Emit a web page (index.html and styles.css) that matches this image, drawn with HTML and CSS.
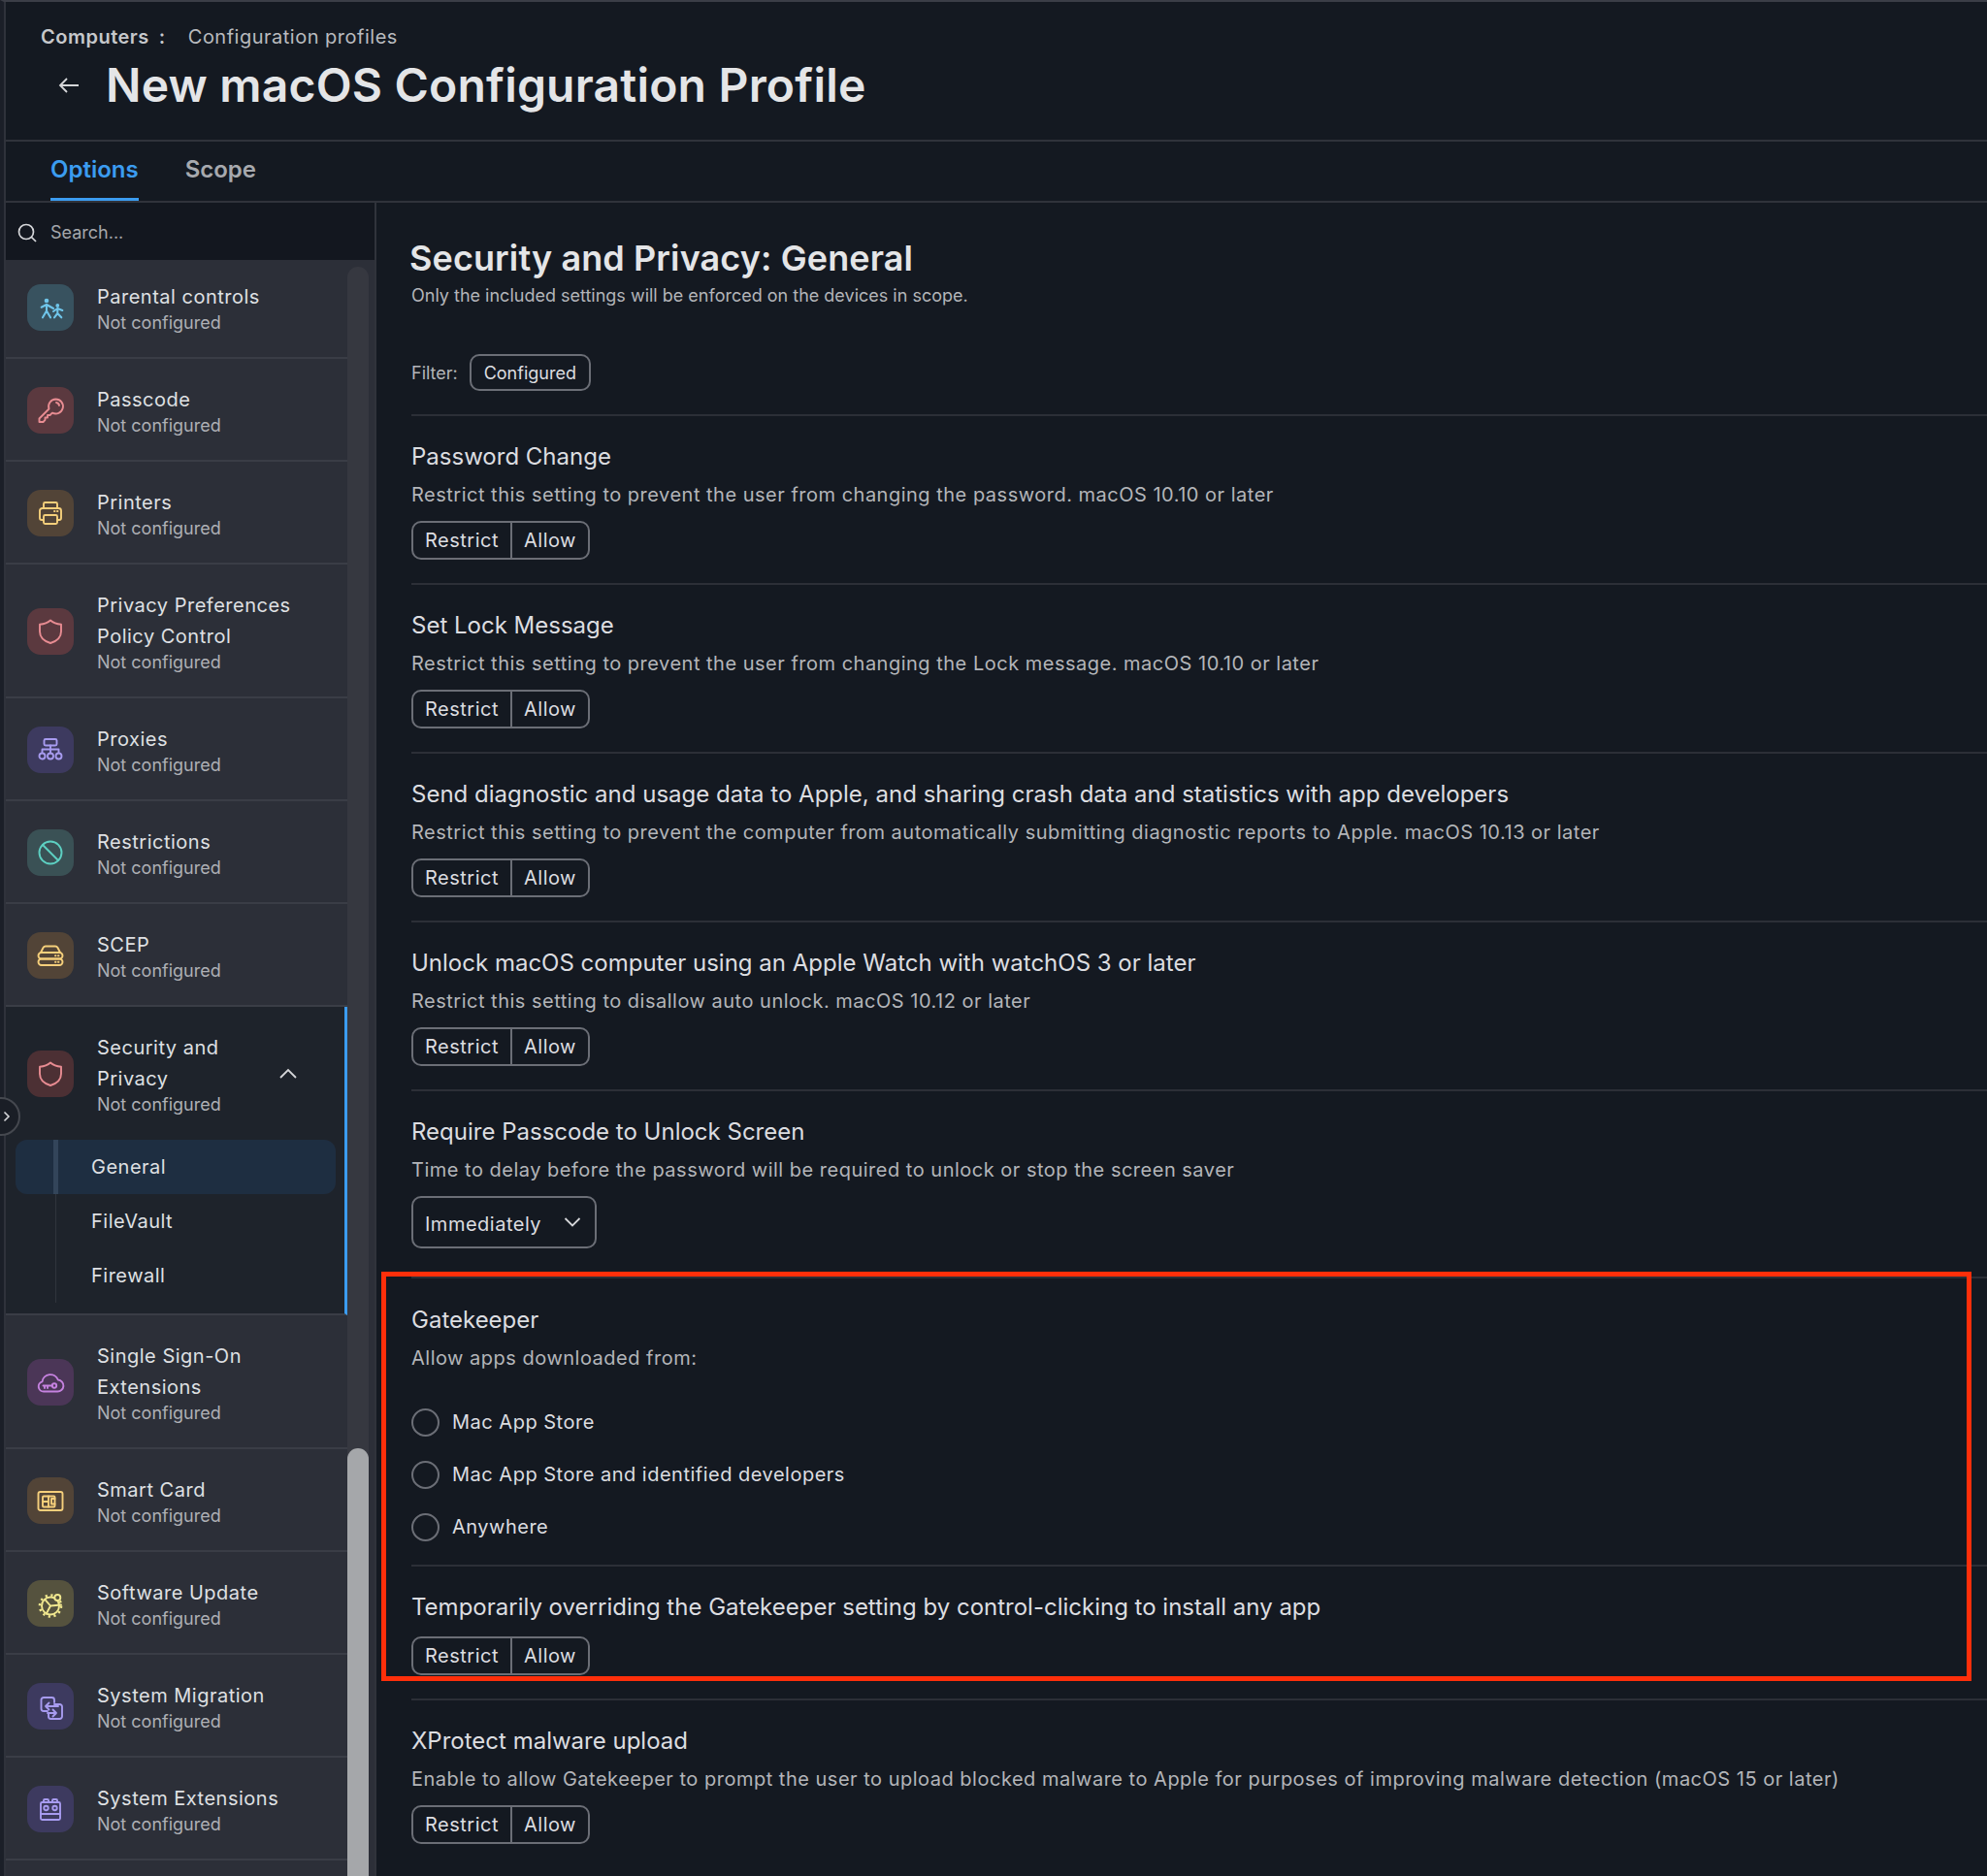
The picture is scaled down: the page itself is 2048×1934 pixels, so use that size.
FILE: index.html
```html
<!DOCTYPE html>
<html lang="en">
<head>
  <meta charset="UTF-8">
  <meta name="viewport" content="width=device-width, initial-scale=1.0">
  <title>New macOS Configuration Profile</title>
  <link rel="stylesheet" href="styles.css">
</head>
<body>
  <div class="app">
    <!-- Page header -->
    <header class="page-header">
      <div class="breadcrumb"><strong>Computers</strong><span class="colon">:</span><span>Configuration profiles</span></div>
      <div class="title-row">
        <svg class="back" viewBox="0 0 22 18"><path d="M21 9H2M9 2 2 9l7 7"/></svg>
        <h1>New macOS Configuration Profile</h1>
      </div>
    </header>

    <nav class="tabs">
      <a class="tab active">Options</a>
      <a class="tab">Scope</a>
    </nav>

    <div class="content">
      <!-- Payload list -->
      <aside class="sidebar">
        <div class="search">
          <svg viewBox="0 0 20 20"><circle cx="9" cy="9" r="7.5"/><path d="m14.5 14.5 4.5 4.5"/></svg>
          <span>Search...</span>
        </div>
        <div class="sidebar-body">
          <div class="list">
            <div class="item">
              <span class="tile blue"><svg viewBox="0 0 28 28"><circle class="dot" cx="10" cy="7" r="2.300"/><circle class="dot" cx="21.300" cy="12" r="1.900"/><path class="bold" d="M4.700 13.700 10 11l7 4M10 11v6.500l-4 6.800M10 17.500l4 6.800M17 18l4.300-3 5 2M21.300 15v5l-3.300 4.300M21.300 20l4 4.300"/></svg></span>
              <div class="item-text"><div class="item-title">Parental controls</div><div class="item-sub">Not configured</div></div>
            </div>
            <div class="item">
              <span class="tile red"><svg viewBox="0 0 28 28"><path d="M19.500 2.500a7.500 7.500 0 1 1-3.600 14.100l-2.400 2.400H11v2.500H8.500v2.300L6.500 26h-4v-3.500l10-10a7.500 7.500 0 0 1 7-10z"/><path d="M20 6a3.500 3.500 0 0 1 3 3"/></svg></span>
              <div class="item-text"><div class="item-title">Passcode</div><div class="item-sub">Not configured</div></div>
            </div>
            <div class="item">
              <span class="tile amber"><svg viewBox="0 0 28 28"><path d="M7 9V4.500A1.500 1.500 0 0 1 8.500 3h11A1.500 1.500 0 0 1 21 4.500V9"/><path d="M7 21H5a2 2 0 0 1-2-2v-7.500A2.500 2.500 0 0 1 5.500 9h17a2.500 2.500 0 0 1 2.500 2.500V19a2 2 0 0 1-2 2h-2"/><rect x="7" y="16" width="14" height="9" rx="1.500"/><path d="M18 12h.5M21 12h.5"/></svg></span>
              <div class="item-text"><div class="item-title">Printers</div><div class="item-sub">Not configured</div></div>
            </div>
            <div class="item">
              <span class="tile red"><svg viewBox="0 0 28 28"><path d="M14 2.500c-3 2.600-6.500 3.800-11 4.300V14c0 5.800 4.500 10 11 12 6.500-2 11-6.200 11-12V6.800c-4.500-.5-8-1.700-11-4.300z"/></svg></span>
              <div class="item-text"><div class="item-title">Privacy Preferences<br>Policy Control</div><div class="item-sub">Not configured</div></div>
            </div>
            <div class="item">
              <span class="tile violet"><svg viewBox="0 0 28 28"><rect x="7.500" y="3" width="13" height="6.500" rx="1.500"/><path d="M14 9.500v8M5.500 17v-3.500h17V17"/><circle cx="5.500" cy="20.500" r="3"/><circle cx="14" cy="20.500" r="3"/><circle cx="22.500" cy="20.500" r="3"/></svg></span>
              <div class="item-text"><div class="item-title">Proxies</div><div class="item-sub">Not configured</div></div>
            </div>
            <div class="item">
              <span class="tile teal"><svg viewBox="0 0 28 28"><circle cx="14" cy="14" r="11.500"/><path d="m6 6 16 16"/></svg></span>
              <div class="item-text"><div class="item-title">Restrictions</div><div class="item-sub">Not configured</div></div>
            </div>
            <div class="item">
              <span class="tile amber"><svg viewBox="0 0 28 28"><path d="M4 11l2.500-5a3 3 0 0 1 2.500-1.500h10A3 3 0 0 1 21.500 6l2.500 5"/><rect x="1.500" y="11" width="25" height="6.500" rx="3.200"/><rect x="1.500" y="17.500" width="25" height="6.500" rx="3.200"/><path d="M19 14.200h.5M22 14.200h.5M19 20.800h.5M22 20.800h.5"/></svg></span>
              <div class="item-text"><div class="item-title">SCEP</div><div class="item-sub">Not configured</div></div>
            </div>

            <div class="group">
              <div class="item open">
                <span class="tile red dim"><svg viewBox="0 0 28 28"><path d="M14 2.500c-3 2.600-6.500 3.800-11 4.300V14c0 5.800 4.500 10 11 12 6.500-2 11-6.200 11-12V6.800c-4.500-.5-8-1.700-11-4.300z"/></svg></span>
                <div class="item-text"><div class="item-title">Security and<br>Privacy</div><div class="item-sub">Not configured</div></div>
                <svg class="caret" viewBox="0 0 18 12"><path d="m1 10 8-8 8 8"/></svg>
              </div>
              <ul class="sub-list">
                <li class="selected">General</li>
                <li>FileVault</li>
                <li>Firewall</li>
              </ul>
            </div>

            <div class="item">
              <span class="tile purple"><svg viewBox="0 0 28 28"><path d="M7 23.500a5.200 5.200 0 0 1-1.500-10.200A8.500 8.500 0 0 1 21.800 11.500 6 6 0 0 1 21 23.500z"/><circle cx="18" cy="17.500" r="2.200"/><path d="M15.800 17.500H6.500M8 17.500V20M11 17.500V20"/></svg></span>
              <div class="item-text"><div class="item-title">Single Sign-On<br>Extensions</div><div class="item-sub">Not configured</div></div>
            </div>
            <div class="item">
              <span class="tile amber"><svg viewBox="0 0 28 28"><rect x="1.500" y="5" width="25" height="19" rx="2"/><rect x="6" y="9.500" width="12.500" height="11" rx="1"/><path d="M12 9.500V15H6M12 15v5.500M15 12h3.500M15 12v5.500h3.500"/></svg></span>
              <div class="item-text"><div class="item-title">Smart Card</div><div class="item-sub">Not configured</div></div>
            </div>
            <div class="item">
              <span class="tile olive"><svg viewBox="0 0 28 28"><circle cx="14" cy="16.500" r="9"/><circle class="teeth" cx="14" cy="16.500" r="11"/><path d="m14 16.500-5.300-6.200M14 16.500l11-1M14 16.500l-4.300 8.200"/><circle class="mask" cx="21.300" cy="8" r="3"/></svg></span>
              <div class="item-text"><div class="item-title">Software Update</div><div class="item-sub">Not configured</div></div>
            </div>
            <div class="item">
              <span class="tile violet"><svg viewBox="0 0 28 28"><path d="M11 19H7a2.500 2.500 0 0 1-2.500-2.500v-9A2.500 2.500 0 0 1 7 5h8.500A2.500 2.500 0 0 1 18 7.500V10"/><path d="M18 12h5.500a2.500 2.500 0 0 1 2.500 2.500v10a2.500 2.500 0 0 1-2.500 2.500h-9a2.500 2.500 0 0 1-2.500-2.500V22"/><path d="M22 14H9M12.500 10.500 9 14l3.500 3.500M11 21h9M16.500 17.500 20 21l-3.500 3.500"/></svg></span>
              <div class="item-text"><div class="item-title">System Migration</div><div class="item-sub">Not configured</div></div>
            </div>
            <div class="item">
              <span class="tile violet"><svg viewBox="0 0 28 28"><path d="M7 7V5a1 1 0 0 1 1-1h3a1 1 0 0 1 1 1v2M16 7V5a1 1 0 0 1 1-1h3a1 1 0 0 1 1 1v2"/><rect x="4" y="7" width="20" height="18" rx="1.500"/><path d="M4 19h20"/><circle cx="9.500" cy="13" r="2.200"/><circle cx="18.500" cy="13" r="2.200"/></svg></span>
              <div class="item-text"><div class="item-title">System Extensions</div><div class="item-sub">Not configured</div></div>
            </div>
            <div class="item"></div>
          </div>
          <div class="scrollbar"><div class="thumb"></div></div>
        </div>
        <button class="collapse"><svg viewBox="0 0 8 12"><path d="m1.500 1.500 4.500 4.500-4.500 4.500"/></svg></button>
      </aside>

      <!-- Settings -->
      <main class="main">
        <h2>Security and Privacy: General</h2>
        <p class="lead">Only the included settings will be enforced on the devices in scope.</p>
        <div class="filter"><span>Filter:</span><button class="chip">Configured</button></div>

        <section class="setting">
          <h3>Password Change</h3>
          <p>Restrict this setting to prevent the user from changing the password. macOS 10.10 or later</p>
          <div class="toggle"><button>Restrict</button><button>Allow</button></div>
        </section>
        <section class="setting">
          <h3>Set Lock Message</h3>
          <p>Restrict this setting to prevent the user from changing the Lock message. macOS 10.10 or later</p>
          <div class="toggle"><button>Restrict</button><button>Allow</button></div>
        </section>
        <section class="setting">
          <h3>Send diagnostic and usage data to Apple, and sharing crash data and statistics with app developers</h3>
          <p>Restrict this setting to prevent the computer from automatically submitting diagnostic reports to Apple. macOS 10.13 or later</p>
          <div class="toggle"><button>Restrict</button><button>Allow</button></div>
        </section>
        <section class="setting">
          <h3>Unlock macOS computer using an Apple Watch with watchOS 3 or later</h3>
          <p>Restrict this setting to disallow auto unlock. macOS 10.12 or later</p>
          <div class="toggle"><button>Restrict</button><button>Allow</button></div>
        </section>
        <section class="setting passcode">
          <h3>Require Passcode to Unlock Screen</h3>
          <p>Time to delay before the password will be required to unlock or stop the screen saver</p>
          <div class="select"><span>Immediately</span><svg viewBox="0 0 18 12"><path d="m1.500 2 7.500 7.500L16.500 2"/></svg></div>
        </section>
        <section class="setting gatekeeper">
          <h3>Gatekeeper</h3>
          <p>Allow apps downloaded from:</p>
          <div class="radios">
            <label class="radio"><span class="circle"></span>Mac App Store</label>
            <label class="radio"><span class="circle"></span>Mac App Store and identified developers</label>
            <label class="radio"><span class="circle"></span>Anywhere</label>
          </div>
        </section>
        <section class="setting override">
          <h3>Temporarily overriding the Gatekeeper setting by control-clicking to install any app</h3>
          <div class="toggle"><button>Restrict</button><button>Allow</button></div>
        </section>
        <section class="setting">
          <h3>XProtect malware upload</h3>
          <p>Enable to allow Gatekeeper to prompt the user to upload blocked malware to Apple for purposes of improving malware detection (macOS 15 or later)</p>
          <div class="toggle"><button>Restrict</button><button>Allow</button></div>
        </section>

        <!-- Annotation over the screenshot -->
        <div class="highlight"></div>
      </main>
    </div>
  </div>
</body>
</html>
```

FILE: styles.css
```css
* {
  box-sizing: border-box;
}
html, body {
  margin: 0;
  height: 1934px;
  overflow: hidden;
}
body {
  font-family: Inter, "Noto Sans", sans-serif;
  background: #141921;
  color: #dcdde0;
}
.app {
  height: 1934px;
  display: flex;
  flex-direction: column;
  border-top: 2px solid #3b3e47;
  border-left: 4px solid #1b1f28;
}

/* Header */
.page-header {
  height: 144px;
  padding: 24px 0 0 38px;
  border-bottom: 2px solid #30333b;
  box-shadow: inset 2px 0 0 #2f323b;
}
.breadcrumb {
  display: flex;
  align-items: center;
  height: 24px;
  font-size: 20px;
  letter-spacing: 0.5px;
  color: #b9bbbf;
}
.breadcrumb strong {
  font-weight: 600;
  color: #c6c8cb;
}
.colon {
  width: 40px;
  padding-left: 10px;
  font-weight: 600;
  color: #c6c8cb;
}
.title-row {
  display: flex;
  align-items: center;
  height: 52px;
  margin-top: 12px;
}
.back {
  width: 22px;
  height: 18px;
  margin-left: 18px;
  fill: none;
  stroke: #d5d6d9;
  stroke-width: 1.8;
}
h1 {
  margin: 0 0 0 27px;
  font-size: 48px;
  line-height: 52px;
  font-weight: 600;
  letter-spacing: 0.2px;
  color: #e4e5e7;
}

/* Tabs */
.tabs {
  height: 63px;
  display: flex;
  gap: 48px;
  padding-left: 48px;
  border-bottom: 2px solid #30333b;
  box-shadow: inset 2px 0 0 #2f323b;
}
.tab {
  height: 61px;
  line-height: 58px;
  font-size: 24px;
  font-weight: 600;
  color: #a7a9ae;
}
.tab.active {
  color: #3b9cf0;
  border-bottom: 3px solid #3b9cf0;
}

.content {
  flex: 1;
  min-height: 0;
  display: flex;
}

/* Sidebar */
.sidebar {
  position: relative;
  width: 384px;
  flex: none;
  display: flex;
  flex-direction: column;
  background: #2c2f38;
  border-left: 2px solid #2f323b;
  border-right: 2px solid #30333b;
}
.search {
  height: 59px;
  flex: none;
  display: flex;
  align-items: center;
  gap: 14px;
  padding: 2px 0 0 12px;
  background: #13171f;
  font-size: 18px;
  color: #a5a7ab;
}
.search svg {
  width: 20px;
  height: 20px;
  fill: none;
  stroke: #d5d6d9;
  stroke-width: 1.7;
}
.sidebar-body {
  flex: 1;
  min-height: 0;
  display: flex;
  overflow: hidden;
}
.list {
  width: 352px;
  flex: none;
  margin-top: -4px;
}
.item {
  display: flex;
  align-items: center;
  min-height: 106px;
  padding: 26px 0 24px 22px;
  border-bottom: 2px solid #3a3d46;
}
.tile {
  width: 48px;
  height: 48px;
  flex: none;
  display: flex;
  align-items: center;
  justify-content: center;
  border-radius: 14px;
}
.tile svg {
  width: 28px;
  height: 28px;
  overflow: visible;
  fill: none;
  stroke: currentColor;
  stroke-width: 1.9;
  stroke-linecap: round;
  stroke-linejoin: round;
}
.tile svg .dot {
  fill: currentColor;
  stroke: none;
}
.tile svg .bold {
  stroke-width: 2.1;
}
.tile svg .teeth {
  stroke-width: 2.6;
  stroke-dasharray: 2.2 3.560;
  stroke-linecap: butt;
}
.tile svg .mask {
  fill: #55523e;
}
.blue { background: #38525f; color: #6fc5ea; }
.red { background: #5b393f; color: #e88c92; }
.red.dim { background: #4c3034; }
.amber { background: #524437; color: #f5cf7b; }
.violet { background: #3d3a5f; color: #a79bef; }
.teal { background: #3a5155; color: #5dd0c2; }
.purple { background: #4b3657; color: #c682e0; }
.olive { background: #55523e; color: #f1e88f; }
.item-text {
  margin-left: 24px;
  min-width: 0;
}
.item-title {
  font-size: 20px;
  line-height: 32px;
  letter-spacing: 0.5px;
  color: #dfe0e3;
}
.item-sub {
  font-size: 18px;
  line-height: 22px;
  color: #aeb0b5;
}
.group {
  background: #1e232b;
  border-right: 3px solid #3b9cf0;
  border-bottom: 2px solid #3a3d46;
  padding-bottom: 11px;
}
.item.open {
  padding-bottom: 0;
  min-height: 0;
  border: 0;
}
.caret {
  width: 18px;
  height: 12px;
  margin: 0 49px 0 auto;
  fill: none;
  stroke: #d5d6d9;
  stroke-width: 1.8;
}
.sub-list {
  list-style: none;
  margin: 25px 9px 0 10px;
  padding: 0;
}
.sub-list li {
  height: 56px;
  line-height: 56px;
  padding-left: 78px;
  font-size: 20px;
  letter-spacing: 0.5px;
  color: #dfe0e3;
  background: linear-gradient(#30343c, #30343c) 41px 0 / 1px 100% no-repeat;
}
.sub-list li.selected {
  background: linear-gradient(#33455a, #33455a) 39px 0 / 5px 100% no-repeat, #1e2e41;
  border-radius: 12px;
}
.scrollbar {
  width: 22px;
  flex: none;
  margin-top: 7px;
  border-radius: 11px 11px 0 0;
  background: #363840;
}
.thumb {
  height: 500px;
  margin-top: 1218px;
  border-radius: 11px 11px 0 0;
  background: #a5a7aa;
}
.collapse {
  position: absolute;
  left: -25px;
  top: 922px;
  width: 40px;
  height: 40px;
  padding: 0 0 0 20px;
  display: flex;
  align-items: center;
  border: 2px solid #45484f;
  border-radius: 50%;
  background: #1a1e26;
}
.collapse svg {
  width: 8px;
  height: 12px;
  fill: none;
  stroke: #d5d6d9;
  stroke-width: 1.6;
}

/* Main panel */
.main {
  position: relative;
  flex: 1;
  min-width: 0;
  padding-left: 36px;
  overflow: hidden;
}
h2 {
  margin: 35px 0 0 -2px;
  font-size: 36px;
  line-height: 44px;
  font-weight: 600;
  letter-spacing: 0.1px;
  color: #e4e5e7;
}
.lead {
  margin: 5px 0 0;
  font-size: 18px;
  line-height: 24px;
  color: #b3b5b9;
}
.filter {
  display: flex;
  align-items: center;
  gap: 12px;
  height: 38px;
  margin: 48px 0 24px;
  font-size: 18px;
  color: #b3b5b9;
}
.chip {
  height: 38px;
  width: 125px;
  padding: 0;
  font: inherit;
  color: #dcdde0;
  background: none;
  border: 2px solid #6b6e76;
  border-radius: 10px;
}
.setting {
  padding: 26px 0 24px;
  border-top: 2px solid #2c2f37;
}
h3 {
  margin: 0;
  font-size: 24px;
  line-height: 32px;
  font-weight: 400;
  color: #dcdde0;
}
.setting p {
  margin: 7px 0 11px;
  font-size: 20px;
  line-height: 32px;
  letter-spacing: 0.5px;
  color: #b3b5b9;
}
.toggle {
  display: inline-flex;
  vertical-align: top;
  height: 40px;
  border: 2px solid #6b6e76;
  border-radius: 10px;
}
.toggle button {
  padding: 0 12px;
  font: inherit;
  font-size: 20px;
  letter-spacing: 0.5px;
  color: #dcdde0;
  background: none;
  border: 0;
}
.toggle button + button {
  border-left: 2px solid #6b6e76;
}
.select {
  display: flex;
  align-items: center;
  justify-content: space-between;
  width: 191px;
  height: 54px;
  padding: 0 14px 0 12px;
  border: 2px solid #6b6e76;
  border-radius: 10px;
  font-size: 20px;
  letter-spacing: 0.5px;
}
.select span {
  margin-top: 3px;
}
.select svg {
  width: 18px;
  height: 12px;
  fill: none;
  stroke: #d5d6d9;
  stroke-width: 1.8;
}
.setting.passcode {
  padding-bottom: 29px;
}
.setting.gatekeeper {
  padding: 27px 0 12px;
}
.setting.gatekeeper p {
  margin-bottom: 0;
}
.radios {
  margin-top: 23px;
}
.radio {
  display: flex;
  align-items: center;
  gap: 13px;
  height: 54px;
  font-size: 20px;
  letter-spacing: 0.5px;
}
.circle {
  width: 29px;
  height: 29px;
  border: 2px solid #6b6e76;
  border-radius: 50%;
}
.setting.override {
  padding: 26px 0 24px;
}
.setting.override h3 {
  margin-bottom: 14px;
}
.highlight {
  position: absolute;
  left: 5px;
  top: 1102px;
  width: 1639px;
  height: 422px;
  border: 5px solid #ff2f0a;
  pointer-events: none;
}
```
